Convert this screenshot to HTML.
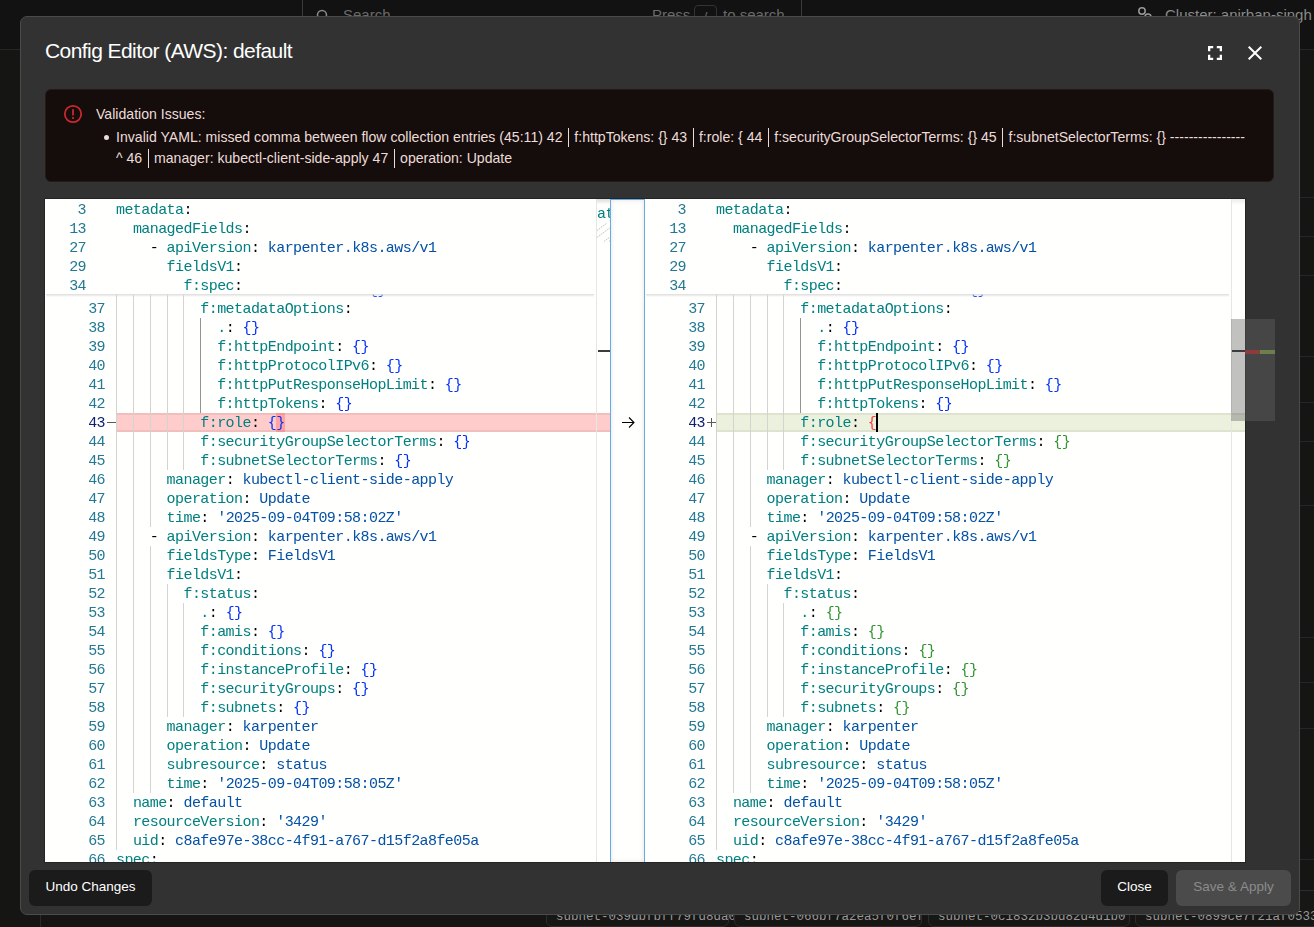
<!DOCTYPE html><html><head><meta charset="utf-8"><style>
*{margin:0;padding:0;box-sizing:border-box}
html,body{width:1314px;height:927px;overflow:hidden;background:#151513;font-family:"Liberation Sans",sans-serif}
.abs{position:absolute}
.modal{position:absolute;left:20px;top:16px;width:1280px;height:899px;background:#323232;border:1px solid #4b4b4b;border-radius:7px}
.title{position:absolute;left:45px;top:38.5px;font-size:21px;color:#fff;white-space:nowrap;letter-spacing:-0.57px}
.alert{position:absolute;left:45px;top:89px;width:1229px;height:93px;background:#150c0c;border:1px solid #251a1a;border-radius:6px}
.atext{position:absolute;color:#ecdcd8;font-size:14.1px;white-space:nowrap;line-height:21px}
.bar{display:inline-block;width:1.3px;height:19px;background:#ecdcd8;vertical-align:-5px;margin:0 5px 0 5.5px}
.edwrap{position:absolute;left:45px;top:199px;width:1200px;height:663px;background:#fffffe;overflow:hidden}
.ed{position:absolute;top:199px;height:663px;background:#fffffe;overflow:hidden;will-change:transform;font-family:"Liberation Mono",monospace;font-size:15px;letter-spacing:-0.57px}
.cl{position:absolute;left:71px;height:19px;line-height:19px;margin-top:1px;white-space:pre;color:#000}
.ln{position:absolute;left:0;width:60px;text-align:right;height:19px;line-height:19px;margin-top:1px;color:#237893}
.ln.act{color:#0b216f}
.mk{position:absolute;left:61px;width:10px;text-align:center;height:19px;line-height:19px;margin-top:1px;color:#555}
.sln{position:absolute;left:0;width:41px;text-align:right;height:19px;line-height:19px;margin-top:2px;color:#237893}
.sticky{position:absolute;left:0;top:0;right:14px;height:95px;background:#fffffe}
.sticky .cl{margin-top:2px}
.shadow{position:absolute;left:1px;right:16px;top:95px;height:3px;background:linear-gradient(#dcdcdc,rgba(220,220,220,0))}
.g{position:absolute;width:1px;height:19px;background:#d3d3d3}
.ga{background:#939393}
.del{position:absolute;left:71px;right:0;height:19px;background:#ffcccc;border-top:2px solid #f1bebe;border-bottom:2px solid #f1bebe}
.delch{position:absolute;height:19px;background:rgba(255,0,0,0.2)}
.delc{}
.ins{position:absolute;left:71px;right:0;height:19px;background:#ebf1dd;border-top:2px solid #dde3cf;border-bottom:2px solid #dde3cf}
.cur{position:absolute;width:2px;height:19px;background:#000}
.ruler{position:absolute;right:0;top:0;width:14px;height:663px;border-left:1px solid #e6e6e6;background:linear-gradient(rgba(0,0,0,0.08),rgba(0,0,0,0) 6px)}
.btn{position:absolute;top:870px;height:36px;border-radius:6px;font-size:13.5px;line-height:34px;text-align:center;white-space:nowrap}
</style></head><body>

<div class="abs" style="left:0;top:0;width:1314px;height:49px;background:#121212"></div>
<div class="abs" style="left:0;top:49px;width:1314px;height:1px;background:#262626"></div>
<div class="abs" style="left:302px;top:-12px;width:500px;height:45px;border:1px solid #3a3a3a;border-radius:6px"></div>
<svg class="abs" style="left:316px;top:9px" width="14" height="14" viewBox="0 0 14 14"><circle cx="6" cy="6" r="4.5" fill="none" stroke="#888" stroke-width="1.6"/></svg>
<div class="abs" style="left:343px;top:6px;font-size:15px;color:#6a6a6a">Search</div>
<div class="abs" style="left:652px;top:6px;font-size:15px;color:#6a6a6a">Press</div>
<div class="abs" style="left:694px;top:5px;width:23px;height:24px;border:1px solid #333;border-radius:4px;color:#6a6a6a;font-size:13px;text-align:center;line-height:22px">/</div>
<div class="abs" style="left:723px;top:6px;font-size:15px;color:#6a6a6a">to search</div>
<div class="abs" style="left:1165px;top:6px;font-size:15px;color:#8a8a8a;white-space:nowrap">Cluster: anirban-singh</div>
<svg class="abs" style="left:1137px;top:7px" width="20" height="12" viewBox="0 0 20 12"><circle cx="5" cy="4" r="3.2" fill="none" stroke="#999" stroke-width="1.5"/><circle cx="11" cy="10" r="3" fill="none" stroke="#999" stroke-width="1.5"/></svg>
<div class="abs" style="left:40px;top:880px;width:1px;height:47px;background:#2a2a2a"></div>
<div class="abs" style="left:1300px;top:49px;width:14px;height:1px;background:#262626"></div><div class="abs" style="left:1300px;top:197px;width:14px;height:1px;background:#262626"></div><div class="abs" style="left:1300px;top:236px;width:14px;height:1px;background:#262626"></div><div class="abs" style="left:1300px;top:275px;width:14px;height:1px;background:#262626"></div><div class="abs" style="left:1300px;top:356px;width:14px;height:1px;background:#262626"></div><div class="abs" style="left:1300px;top:402px;width:14px;height:1px;background:#262626"></div><div class="abs" style="left:1300px;top:441px;width:14px;height:1px;background:#262626"></div><div class="abs" style="left:1300px;top:505px;width:14px;height:1px;background:#262626"></div><div class="abs" style="left:1300px;top:637px;width:14px;height:1px;background:#262626"></div><div class="abs" style="left:1300px;top:682px;width:14px;height:1px;background:#262626"></div><div class="abs" style="left:1300px;top:728px;width:14px;height:1px;background:#262626"></div><div class="abs" style="left:1300px;top:859px;width:14px;height:1px;background:#262626"></div><div class="abs" style="left:1300px;top:890px;width:14px;height:1px;background:#262626"></div><div class="abs" style="left:1300px;top:899px;width:14px;height:1px;background:#262626"></div><div class="abs" style="left:546px;top:890px;width:183px;height:37px;border:1px solid #2c2c2c;border-radius:6px;background:#171715"></div><div class="abs" style="left:556px;top:909.5px;font-family:'Liberation Mono',monospace;font-size:12.5px;letter-spacing:0px;color:#999999;white-space:nowrap">subnet-039dbfbff79fd8da0</div><div class="abs" style="left:734px;top:890px;width:188px;height:37px;border:1px solid #2c2c2c;border-radius:6px;background:#171715"></div><div class="abs" style="left:744px;top:909.5px;font-family:'Liberation Mono',monospace;font-size:12.5px;letter-spacing:0px;color:#999999;white-space:nowrap">subnet-066bf7a2ea5f0f6ef</div><div class="abs" style="left:928px;top:890px;width:202px;height:37px;border:1px solid #2c2c2c;border-radius:6px;background:#171715"></div><div class="abs" style="left:938px;top:909.5px;font-family:'Liberation Mono',monospace;font-size:12.5px;letter-spacing:0px;color:#999999;white-space:nowrap">subnet-0c1832b3bd82d4d1b0</div><div class="abs" style="left:1135px;top:890px;width:205px;height:37px;border:1px solid #2c2c2c;border-radius:6px;background:#171715"></div><div class="abs" style="left:1145px;top:909.5px;font-family:'Liberation Mono',monospace;font-size:12.5px;letter-spacing:0px;color:#999999;white-space:nowrap">subnet-0899ce7f21af0533</div>
<div class="modal"></div>
<div class="title">Config Editor (AWS): default</div>

<svg class="abs" style="left:1208px;top:46px" width="14" height="14" viewBox="0 0 14 14" fill="none" stroke="#fff" stroke-width="2.3" stroke-linecap="butt"><path d="M1.15 5.2V1.15H5.2M8.8 1.15H12.85V5.2M12.85 8.8V12.85H8.8M5.2 12.85H1.15V8.8"/></svg>
<svg class="abs" style="left:1248px;top:46px" width="14" height="14" viewBox="0 0 14 14" fill="none" stroke="#fff" stroke-width="2"><path d="M0.7 0.7L13.3 13.3M13.3 0.7L0.7 13.3"/></svg>

<div class="alert"></div>
<svg class="abs" style="left:63px;top:104px" width="20" height="20" viewBox="0 0 20 20"><circle cx="10" cy="10" r="8.2" fill="none" stroke="#c9282d" stroke-width="1.8"/><rect x="9.1" y="5.2" width="1.8" height="6.3" fill="#c9282d"/><rect x="9.1" y="13" width="1.8" height="1.9" fill="#c9282d"/></svg>
<div class="atext" style="left:96px;top:104px">Validation Issues:</div>
<div class="abs" style="left:103.5px;top:134.5px;width:5.5px;height:5.5px;border-radius:50%;background:#ecdcd8"></div>
<div class="atext" style="left:116px;top:127px">Invalid YAML: missed comma between flow collection entries (45:11) 42<span class="bar"></span>f:httpTokens: {} 43<span class="bar"></span>f:role: { 44<span class="bar"></span>f:securityGroupSelectorTerms: {} 45<span class="bar"></span>f:subnetSelectorTerms: {} ----------------</div>
<div class="atext" style="left:116px;top:148px">^ 46<span class="bar"></span>manager: kubectl-client-side-apply 47<span class="bar"></span>operation: Update</div>
<div class="abs" style="left:44px;top:198px;width:1202px;height:665px;background:#fffffe;border:1px solid #242424"></div>
<div class="ed" style="left:45px;width:565px"><div class="g" style="top:62px;left:71.00px"></div><div class="g" style="top:62px;left:87.86px"></div><div class="g" style="top:62px;left:104.72px"></div><div class="g" style="top:62px;left:121.58px"></div><div class="g" style="top:62px;left:138.44px"></div><div class="ln" style="top:62px">35</div><div class="cl" style="top:62px">          <span style="color:#008080">.</span><span style="color:#000000">:</span> <span style="color:#0431fa">{}</span></div><div class="g" style="top:81px;left:71.00px"></div><div class="g" style="top:81px;left:87.86px"></div><div class="g" style="top:81px;left:104.72px"></div><div class="g" style="top:81px;left:121.58px"></div><div class="g" style="top:81px;left:138.44px"></div><div class="ln" style="top:81px">36</div><div class="cl" style="top:81px">          <span style="color:#008080">f:amiSelectorTerms</span><span style="color:#000000">:</span> <span style="color:#0431fa">{}</span></div><div class="g" style="top:100px;left:71.00px"></div><div class="g" style="top:100px;left:87.86px"></div><div class="g" style="top:100px;left:104.72px"></div><div class="g" style="top:100px;left:121.58px"></div><div class="g" style="top:100px;left:138.44px"></div><div class="ln" style="top:100px">37</div><div class="cl" style="top:100px">          <span style="color:#008080">f:metadataOptions</span><span style="color:#000000">:</span></div><div class="g" style="top:119px;left:71.00px"></div><div class="g" style="top:119px;left:87.86px"></div><div class="g" style="top:119px;left:104.72px"></div><div class="g" style="top:119px;left:121.58px"></div><div class="g" style="top:119px;left:138.44px"></div><div class="g ga" style="top:119px;left:155.30px"></div><div class="ln" style="top:119px">38</div><div class="cl" style="top:119px">            <span style="color:#008080">.</span><span style="color:#000000">:</span> <span style="color:#0431fa">{}</span></div><div class="g" style="top:138px;left:71.00px"></div><div class="g" style="top:138px;left:87.86px"></div><div class="g" style="top:138px;left:104.72px"></div><div class="g" style="top:138px;left:121.58px"></div><div class="g" style="top:138px;left:138.44px"></div><div class="g ga" style="top:138px;left:155.30px"></div><div class="ln" style="top:138px">39</div><div class="cl" style="top:138px">            <span style="color:#008080">f:httpEndpoint</span><span style="color:#000000">:</span> <span style="color:#0431fa">{}</span></div><div class="g" style="top:157px;left:71.00px"></div><div class="g" style="top:157px;left:87.86px"></div><div class="g" style="top:157px;left:104.72px"></div><div class="g" style="top:157px;left:121.58px"></div><div class="g" style="top:157px;left:138.44px"></div><div class="g ga" style="top:157px;left:155.30px"></div><div class="ln" style="top:157px">40</div><div class="cl" style="top:157px">            <span style="color:#008080">f:httpProtocolIPv6</span><span style="color:#000000">:</span> <span style="color:#0431fa">{}</span></div><div class="g" style="top:176px;left:71.00px"></div><div class="g" style="top:176px;left:87.86px"></div><div class="g" style="top:176px;left:104.72px"></div><div class="g" style="top:176px;left:121.58px"></div><div class="g" style="top:176px;left:138.44px"></div><div class="g ga" style="top:176px;left:155.30px"></div><div class="ln" style="top:176px">41</div><div class="cl" style="top:176px">            <span style="color:#008080">f:httpPutResponseHopLimit</span><span style="color:#000000">:</span> <span style="color:#0431fa">{}</span></div><div class="g" style="top:195px;left:71.00px"></div><div class="g" style="top:195px;left:87.86px"></div><div class="g" style="top:195px;left:104.72px"></div><div class="g" style="top:195px;left:121.58px"></div><div class="g" style="top:195px;left:138.44px"></div><div class="g ga" style="top:195px;left:155.30px"></div><div class="ln" style="top:195px">42</div><div class="cl" style="top:195px">            <span style="color:#008080">f:httpTokens</span><span style="color:#000000">:</span> <span style="color:#0431fa">{}</span></div><div class="del" style="top:214px"></div><div class="delch" style="top:214px;left:231.17px;width:8.43px"></div><div class="g" style="top:214px;left:71.00px"></div><div class="g" style="top:214px;left:87.86px"></div><div class="g" style="top:214px;left:104.72px"></div><div class="g" style="top:214px;left:121.58px"></div><div class="g" style="top:214px;left:138.44px"></div><div class="ln act" style="top:214px">43</div><div class="abs" style="top:223px;left:62px;width:9px;height:1px;background:#5a5a5a"></div><div class="cl" style="top:214px">          <span style="color:#008080">f:role</span><span style="color:#000000">:</span> <span style="color:#0431fa">{</span><span class="delc" style="color:#0431fa">}</span></div><div class="g" style="top:233px;left:71.00px"></div><div class="g" style="top:233px;left:87.86px"></div><div class="g" style="top:233px;left:104.72px"></div><div class="g" style="top:233px;left:121.58px"></div><div class="g" style="top:233px;left:138.44px"></div><div class="ln" style="top:233px">44</div><div class="cl" style="top:233px">          <span style="color:#008080">f:securityGroupSelectorTerms</span><span style="color:#000000">:</span> <span style="color:#0431fa">{}</span></div><div class="g" style="top:252px;left:71.00px"></div><div class="g" style="top:252px;left:87.86px"></div><div class="g" style="top:252px;left:104.72px"></div><div class="g" style="top:252px;left:121.58px"></div><div class="g" style="top:252px;left:138.44px"></div><div class="ln" style="top:252px">45</div><div class="cl" style="top:252px">          <span style="color:#008080">f:subnetSelectorTerms</span><span style="color:#000000">:</span> <span style="color:#0431fa">{}</span></div><div class="g" style="top:271px;left:71.00px"></div><div class="g" style="top:271px;left:87.86px"></div><div class="g" style="top:271px;left:104.72px"></div><div class="ln" style="top:271px">46</div><div class="cl" style="top:271px">      <span style="color:#008080">manager</span><span style="color:#000000">:</span> <span style="color:#0451a5">kubectl-client-side-apply</span></div><div class="g" style="top:290px;left:71.00px"></div><div class="g" style="top:290px;left:87.86px"></div><div class="g" style="top:290px;left:104.72px"></div><div class="ln" style="top:290px">47</div><div class="cl" style="top:290px">      <span style="color:#008080">operation</span><span style="color:#000000">:</span> <span style="color:#0451a5">Update</span></div><div class="g" style="top:309px;left:71.00px"></div><div class="g" style="top:309px;left:87.86px"></div><div class="g" style="top:309px;left:104.72px"></div><div class="ln" style="top:309px">48</div><div class="cl" style="top:309px">      <span style="color:#008080">time</span><span style="color:#000000">:</span> <span style="color:#0451a5">'2025-09-04T09:58:02Z'</span></div><div class="g" style="top:328px;left:71.00px"></div><div class="g" style="top:328px;left:87.86px"></div><div class="ln" style="top:328px">49</div><div class="cl" style="top:328px">    <span style="color:#000000">- </span><span style="color:#008080">apiVersion</span><span style="color:#000000">:</span> <span style="color:#0451a5">karpenter.k8s.aws/v1</span></div><div class="g" style="top:347px;left:71.00px"></div><div class="g" style="top:347px;left:87.86px"></div><div class="g" style="top:347px;left:104.72px"></div><div class="ln" style="top:347px">50</div><div class="cl" style="top:347px">      <span style="color:#008080">fieldsType</span><span style="color:#000000">:</span> <span style="color:#0451a5">FieldsV1</span></div><div class="g" style="top:366px;left:71.00px"></div><div class="g" style="top:366px;left:87.86px"></div><div class="g" style="top:366px;left:104.72px"></div><div class="ln" style="top:366px">51</div><div class="cl" style="top:366px">      <span style="color:#008080">fieldsV1</span><span style="color:#000000">:</span></div><div class="g" style="top:385px;left:71.00px"></div><div class="g" style="top:385px;left:87.86px"></div><div class="g" style="top:385px;left:104.72px"></div><div class="g" style="top:385px;left:121.58px"></div><div class="ln" style="top:385px">52</div><div class="cl" style="top:385px">        <span style="color:#008080">f:status</span><span style="color:#000000">:</span></div><div class="g" style="top:404px;left:71.00px"></div><div class="g" style="top:404px;left:87.86px"></div><div class="g" style="top:404px;left:104.72px"></div><div class="g" style="top:404px;left:121.58px"></div><div class="g" style="top:404px;left:138.44px"></div><div class="ln" style="top:404px">53</div><div class="cl" style="top:404px">          <span style="color:#008080">.</span><span style="color:#000000">:</span> <span style="color:#0431fa">{}</span></div><div class="g" style="top:423px;left:71.00px"></div><div class="g" style="top:423px;left:87.86px"></div><div class="g" style="top:423px;left:104.72px"></div><div class="g" style="top:423px;left:121.58px"></div><div class="g" style="top:423px;left:138.44px"></div><div class="ln" style="top:423px">54</div><div class="cl" style="top:423px">          <span style="color:#008080">f:amis</span><span style="color:#000000">:</span> <span style="color:#0431fa">{}</span></div><div class="g" style="top:442px;left:71.00px"></div><div class="g" style="top:442px;left:87.86px"></div><div class="g" style="top:442px;left:104.72px"></div><div class="g" style="top:442px;left:121.58px"></div><div class="g" style="top:442px;left:138.44px"></div><div class="ln" style="top:442px">55</div><div class="cl" style="top:442px">          <span style="color:#008080">f:conditions</span><span style="color:#000000">:</span> <span style="color:#0431fa">{}</span></div><div class="g" style="top:461px;left:71.00px"></div><div class="g" style="top:461px;left:87.86px"></div><div class="g" style="top:461px;left:104.72px"></div><div class="g" style="top:461px;left:121.58px"></div><div class="g" style="top:461px;left:138.44px"></div><div class="ln" style="top:461px">56</div><div class="cl" style="top:461px">          <span style="color:#008080">f:instanceProfile</span><span style="color:#000000">:</span> <span style="color:#0431fa">{}</span></div><div class="g" style="top:480px;left:71.00px"></div><div class="g" style="top:480px;left:87.86px"></div><div class="g" style="top:480px;left:104.72px"></div><div class="g" style="top:480px;left:121.58px"></div><div class="g" style="top:480px;left:138.44px"></div><div class="ln" style="top:480px">57</div><div class="cl" style="top:480px">          <span style="color:#008080">f:securityGroups</span><span style="color:#000000">:</span> <span style="color:#0431fa">{}</span></div><div class="g" style="top:499px;left:71.00px"></div><div class="g" style="top:499px;left:87.86px"></div><div class="g" style="top:499px;left:104.72px"></div><div class="g" style="top:499px;left:121.58px"></div><div class="g" style="top:499px;left:138.44px"></div><div class="ln" style="top:499px">58</div><div class="cl" style="top:499px">          <span style="color:#008080">f:subnets</span><span style="color:#000000">:</span> <span style="color:#0431fa">{}</span></div><div class="g" style="top:518px;left:71.00px"></div><div class="g" style="top:518px;left:87.86px"></div><div class="g" style="top:518px;left:104.72px"></div><div class="ln" style="top:518px">59</div><div class="cl" style="top:518px">      <span style="color:#008080">manager</span><span style="color:#000000">:</span> <span style="color:#0451a5">karpenter</span></div><div class="g" style="top:537px;left:71.00px"></div><div class="g" style="top:537px;left:87.86px"></div><div class="g" style="top:537px;left:104.72px"></div><div class="ln" style="top:537px">60</div><div class="cl" style="top:537px">      <span style="color:#008080">operation</span><span style="color:#000000">:</span> <span style="color:#0451a5">Update</span></div><div class="g" style="top:556px;left:71.00px"></div><div class="g" style="top:556px;left:87.86px"></div><div class="g" style="top:556px;left:104.72px"></div><div class="ln" style="top:556px">61</div><div class="cl" style="top:556px">      <span style="color:#008080">subresource</span><span style="color:#000000">:</span> <span style="color:#0451a5">status</span></div><div class="g" style="top:575px;left:71.00px"></div><div class="g" style="top:575px;left:87.86px"></div><div class="g" style="top:575px;left:104.72px"></div><div class="ln" style="top:575px">62</div><div class="cl" style="top:575px">      <span style="color:#008080">time</span><span style="color:#000000">:</span> <span style="color:#0451a5">'2025-09-04T09:58:05Z'</span></div><div class="g" style="top:594px;left:71.00px"></div><div class="ln" style="top:594px">63</div><div class="cl" style="top:594px">  <span style="color:#008080">name</span><span style="color:#000000">:</span> <span style="color:#0451a5">default</span></div><div class="g" style="top:613px;left:71.00px"></div><div class="ln" style="top:613px">64</div><div class="cl" style="top:613px">  <span style="color:#008080">resourceVersion</span><span style="color:#000000">:</span> <span style="color:#0451a5">'3429'</span></div><div class="g" style="top:632px;left:71.00px"></div><div class="ln" style="top:632px">65</div><div class="cl" style="top:632px">  <span style="color:#008080">uid</span><span style="color:#000000">:</span> <span style="color:#0451a5">c8afe97e-38cc-4f91-a767-d15f2a8fe05a</span></div><div class="ln" style="top:651px">66</div><div class="cl" style="top:651px"><span style="color:#008080">spec</span><span style="color:#000000">:</span></div><div class="g" style="top:670px;left:71.00px"></div><div class="ln" style="top:670px">67</div><div class="cl" style="top:670px">  <span style="color:#008080">amiFamily</span><span style="color:#000000">:</span> <span style="color:#0451a5">AL2023</span></div><div class="sticky"><div class="sln" style="top:0px">3</div><div class="cl" style="top:0px"><span style="color:#008080">metadata</span><span style="color:#000000">:</span></div><div class="sln" style="top:19px">13</div><div class="cl" style="top:19px">  <span style="color:#008080">managedFields</span><span style="color:#000000">:</span></div><div class="sln" style="top:38px">27</div><div class="cl" style="top:38px">    <span style="color:#000000">- </span><span style="color:#008080">apiVersion</span><span style="color:#000000">:</span> <span style="color:#0451a5">karpenter.k8s.aws/v1</span></div><div class="sln" style="top:57px">29</div><div class="cl" style="top:57px">      <span style="color:#008080">fieldsV1</span><span style="color:#000000">:</span></div><div class="sln" style="top:76px">34</div><div class="cl" style="top:76px">        <span style="color:#008080">f:spec</span><span style="color:#000000">:</span></div></div><div class="shadow"></div><div class="ruler"></div></div>
<div class="abs" style="left:610px;top:199px;width:35px;height:663px;border:1px solid #62ade8;border-bottom:none;background:#fffffe;box-shadow:inset 0 0 5px rgba(120,90,80,0.16)"></div>
<div class="abs" style="left:596px;top:199px;width:14px;height:663px;border-left:1px solid #e6e6e6;overflow:hidden">
 <div class="abs" style="left:0;top:0;width:14px;height:5px;background:linear-gradient(rgba(0,0,0,0.06),rgba(0,0,0,0))"></div>
 <div class="abs" style="left:0px;top:3.5px;height:19px;line-height:19px;margin-top:2px;font-family:'Liberation Mono',monospace;font-size:15px;letter-spacing:-0.57px;color:#008080;white-space:pre">at</div>
 <svg class="abs" style="left:0;top:21px" width="14" height="24" viewBox="0 0 14 24" stroke="#bdbdbd" stroke-width="0.9" stroke-dasharray="1.6 0.8"><path d="M0 10.5L10 3M0 17.5L14 7M7 21.5L14 16.3M12 21.5L14 20"/></svg>
 <div class="abs" style="left:1px;top:151px;width:13px;height:2px;background:#3c3c3c"></div>
</div>

<svg class="abs" style="left:621px;top:416px" width="15" height="13" viewBox="0 0 15 13" fill="none" stroke="#000" stroke-width="1.1"><path d="M1 6.5H13M8 1.5L13 6.5L8 11.5"/></svg>
<div class="ed" style="left:645px;width:600px"><div class="g" style="top:62px;left:71.00px"></div><div class="g" style="top:62px;left:87.86px"></div><div class="g" style="top:62px;left:104.72px"></div><div class="g" style="top:62px;left:121.58px"></div><div class="g" style="top:62px;left:138.44px"></div><div class="ln" style="top:62px">35</div><div class="cl" style="top:62px">          <span style="color:#008080">.</span><span style="color:#000000">:</span> <span style="color:#0431fa">{}</span></div><div class="g" style="top:81px;left:71.00px"></div><div class="g" style="top:81px;left:87.86px"></div><div class="g" style="top:81px;left:104.72px"></div><div class="g" style="top:81px;left:121.58px"></div><div class="g" style="top:81px;left:138.44px"></div><div class="ln" style="top:81px">36</div><div class="cl" style="top:81px">          <span style="color:#008080">f:amiSelectorTerms</span><span style="color:#000000">:</span> <span style="color:#0431fa">{}</span></div><div class="g" style="top:100px;left:71.00px"></div><div class="g" style="top:100px;left:87.86px"></div><div class="g" style="top:100px;left:104.72px"></div><div class="g" style="top:100px;left:121.58px"></div><div class="g" style="top:100px;left:138.44px"></div><div class="ln" style="top:100px">37</div><div class="cl" style="top:100px">          <span style="color:#008080">f:metadataOptions</span><span style="color:#000000">:</span></div><div class="g" style="top:119px;left:71.00px"></div><div class="g" style="top:119px;left:87.86px"></div><div class="g" style="top:119px;left:104.72px"></div><div class="g" style="top:119px;left:121.58px"></div><div class="g" style="top:119px;left:138.44px"></div><div class="g ga" style="top:119px;left:155.30px"></div><div class="ln" style="top:119px">38</div><div class="cl" style="top:119px">            <span style="color:#008080">.</span><span style="color:#000000">:</span> <span style="color:#0431fa">{}</span></div><div class="g" style="top:138px;left:71.00px"></div><div class="g" style="top:138px;left:87.86px"></div><div class="g" style="top:138px;left:104.72px"></div><div class="g" style="top:138px;left:121.58px"></div><div class="g" style="top:138px;left:138.44px"></div><div class="g ga" style="top:138px;left:155.30px"></div><div class="ln" style="top:138px">39</div><div class="cl" style="top:138px">            <span style="color:#008080">f:httpEndpoint</span><span style="color:#000000">:</span> <span style="color:#0431fa">{}</span></div><div class="g" style="top:157px;left:71.00px"></div><div class="g" style="top:157px;left:87.86px"></div><div class="g" style="top:157px;left:104.72px"></div><div class="g" style="top:157px;left:121.58px"></div><div class="g" style="top:157px;left:138.44px"></div><div class="g ga" style="top:157px;left:155.30px"></div><div class="ln" style="top:157px">40</div><div class="cl" style="top:157px">            <span style="color:#008080">f:httpProtocolIPv6</span><span style="color:#000000">:</span> <span style="color:#0431fa">{}</span></div><div class="g" style="top:176px;left:71.00px"></div><div class="g" style="top:176px;left:87.86px"></div><div class="g" style="top:176px;left:104.72px"></div><div class="g" style="top:176px;left:121.58px"></div><div class="g" style="top:176px;left:138.44px"></div><div class="g ga" style="top:176px;left:155.30px"></div><div class="ln" style="top:176px">41</div><div class="cl" style="top:176px">            <span style="color:#008080">f:httpPutResponseHopLimit</span><span style="color:#000000">:</span> <span style="color:#0431fa">{}</span></div><div class="g" style="top:195px;left:71.00px"></div><div class="g" style="top:195px;left:87.86px"></div><div class="g" style="top:195px;left:104.72px"></div><div class="g" style="top:195px;left:121.58px"></div><div class="g" style="top:195px;left:138.44px"></div><div class="g ga" style="top:195px;left:155.30px"></div><div class="ln" style="top:195px">42</div><div class="cl" style="top:195px">            <span style="color:#008080">f:httpTokens</span><span style="color:#000000">:</span> <span style="color:#0431fa">{}</span></div><div class="ins" style="top:214px"></div><div class="g" style="top:214px;left:71.00px"></div><div class="g" style="top:214px;left:87.86px"></div><div class="g" style="top:214px;left:104.72px"></div><div class="g" style="top:214px;left:121.58px"></div><div class="g" style="top:214px;left:138.44px"></div><div class="ln act" style="top:214px">43</div><div class="abs" style="top:223px;left:62px;width:9px;height:1px;background:#5a5a5a"></div><div class="abs" style="top:219px;left:66px;width:1px;height:9px;background:#5a5a5a"></div><div class="cl" style="top:214px">          <span style="color:#008080">f:role</span><span style="color:#000000">:</span> <span style="color:rgba(255,18,18,0.8)">{</span></div><div class="cur" style="top:214px;left:231.17px"></div><div class="g" style="top:233px;left:71.00px"></div><div class="g" style="top:233px;left:87.86px"></div><div class="g" style="top:233px;left:104.72px"></div><div class="g" style="top:233px;left:121.58px"></div><div class="g" style="top:233px;left:138.44px"></div><div class="ln" style="top:233px">44</div><div class="cl" style="top:233px">          <span style="color:#008080">f:securityGroupSelectorTerms</span><span style="color:#000000">:</span> <span style="color:#319331">{}</span></div><div class="g" style="top:252px;left:71.00px"></div><div class="g" style="top:252px;left:87.86px"></div><div class="g" style="top:252px;left:104.72px"></div><div class="g" style="top:252px;left:121.58px"></div><div class="g" style="top:252px;left:138.44px"></div><div class="ln" style="top:252px">45</div><div class="cl" style="top:252px">          <span style="color:#008080">f:subnetSelectorTerms</span><span style="color:#000000">:</span> <span style="color:#319331">{}</span></div><div class="g" style="top:271px;left:71.00px"></div><div class="g" style="top:271px;left:87.86px"></div><div class="g" style="top:271px;left:104.72px"></div><div class="ln" style="top:271px">46</div><div class="cl" style="top:271px">      <span style="color:#008080">manager</span><span style="color:#000000">:</span> <span style="color:#0451a5">kubectl-client-side-apply</span></div><div class="g" style="top:290px;left:71.00px"></div><div class="g" style="top:290px;left:87.86px"></div><div class="g" style="top:290px;left:104.72px"></div><div class="ln" style="top:290px">47</div><div class="cl" style="top:290px">      <span style="color:#008080">operation</span><span style="color:#000000">:</span> <span style="color:#0451a5">Update</span></div><div class="g" style="top:309px;left:71.00px"></div><div class="g" style="top:309px;left:87.86px"></div><div class="g" style="top:309px;left:104.72px"></div><div class="ln" style="top:309px">48</div><div class="cl" style="top:309px">      <span style="color:#008080">time</span><span style="color:#000000">:</span> <span style="color:#0451a5">'2025-09-04T09:58:02Z'</span></div><div class="g" style="top:328px;left:71.00px"></div><div class="g" style="top:328px;left:87.86px"></div><div class="ln" style="top:328px">49</div><div class="cl" style="top:328px">    <span style="color:#000000">- </span><span style="color:#008080">apiVersion</span><span style="color:#000000">:</span> <span style="color:#0451a5">karpenter.k8s.aws/v1</span></div><div class="g" style="top:347px;left:71.00px"></div><div class="g" style="top:347px;left:87.86px"></div><div class="g" style="top:347px;left:104.72px"></div><div class="ln" style="top:347px">50</div><div class="cl" style="top:347px">      <span style="color:#008080">fieldsType</span><span style="color:#000000">:</span> <span style="color:#0451a5">FieldsV1</span></div><div class="g" style="top:366px;left:71.00px"></div><div class="g" style="top:366px;left:87.86px"></div><div class="g" style="top:366px;left:104.72px"></div><div class="ln" style="top:366px">51</div><div class="cl" style="top:366px">      <span style="color:#008080">fieldsV1</span><span style="color:#000000">:</span></div><div class="g" style="top:385px;left:71.00px"></div><div class="g" style="top:385px;left:87.86px"></div><div class="g" style="top:385px;left:104.72px"></div><div class="g" style="top:385px;left:121.58px"></div><div class="ln" style="top:385px">52</div><div class="cl" style="top:385px">        <span style="color:#008080">f:status</span><span style="color:#000000">:</span></div><div class="g" style="top:404px;left:71.00px"></div><div class="g" style="top:404px;left:87.86px"></div><div class="g" style="top:404px;left:104.72px"></div><div class="g" style="top:404px;left:121.58px"></div><div class="g" style="top:404px;left:138.44px"></div><div class="ln" style="top:404px">53</div><div class="cl" style="top:404px">          <span style="color:#008080">.</span><span style="color:#000000">:</span> <span style="color:#319331">{}</span></div><div class="g" style="top:423px;left:71.00px"></div><div class="g" style="top:423px;left:87.86px"></div><div class="g" style="top:423px;left:104.72px"></div><div class="g" style="top:423px;left:121.58px"></div><div class="g" style="top:423px;left:138.44px"></div><div class="ln" style="top:423px">54</div><div class="cl" style="top:423px">          <span style="color:#008080">f:amis</span><span style="color:#000000">:</span> <span style="color:#319331">{}</span></div><div class="g" style="top:442px;left:71.00px"></div><div class="g" style="top:442px;left:87.86px"></div><div class="g" style="top:442px;left:104.72px"></div><div class="g" style="top:442px;left:121.58px"></div><div class="g" style="top:442px;left:138.44px"></div><div class="ln" style="top:442px">55</div><div class="cl" style="top:442px">          <span style="color:#008080">f:conditions</span><span style="color:#000000">:</span> <span style="color:#319331">{}</span></div><div class="g" style="top:461px;left:71.00px"></div><div class="g" style="top:461px;left:87.86px"></div><div class="g" style="top:461px;left:104.72px"></div><div class="g" style="top:461px;left:121.58px"></div><div class="g" style="top:461px;left:138.44px"></div><div class="ln" style="top:461px">56</div><div class="cl" style="top:461px">          <span style="color:#008080">f:instanceProfile</span><span style="color:#000000">:</span> <span style="color:#319331">{}</span></div><div class="g" style="top:480px;left:71.00px"></div><div class="g" style="top:480px;left:87.86px"></div><div class="g" style="top:480px;left:104.72px"></div><div class="g" style="top:480px;left:121.58px"></div><div class="g" style="top:480px;left:138.44px"></div><div class="ln" style="top:480px">57</div><div class="cl" style="top:480px">          <span style="color:#008080">f:securityGroups</span><span style="color:#000000">:</span> <span style="color:#319331">{}</span></div><div class="g" style="top:499px;left:71.00px"></div><div class="g" style="top:499px;left:87.86px"></div><div class="g" style="top:499px;left:104.72px"></div><div class="g" style="top:499px;left:121.58px"></div><div class="g" style="top:499px;left:138.44px"></div><div class="ln" style="top:499px">58</div><div class="cl" style="top:499px">          <span style="color:#008080">f:subnets</span><span style="color:#000000">:</span> <span style="color:#319331">{}</span></div><div class="g" style="top:518px;left:71.00px"></div><div class="g" style="top:518px;left:87.86px"></div><div class="g" style="top:518px;left:104.72px"></div><div class="ln" style="top:518px">59</div><div class="cl" style="top:518px">      <span style="color:#008080">manager</span><span style="color:#000000">:</span> <span style="color:#0451a5">karpenter</span></div><div class="g" style="top:537px;left:71.00px"></div><div class="g" style="top:537px;left:87.86px"></div><div class="g" style="top:537px;left:104.72px"></div><div class="ln" style="top:537px">60</div><div class="cl" style="top:537px">      <span style="color:#008080">operation</span><span style="color:#000000">:</span> <span style="color:#0451a5">Update</span></div><div class="g" style="top:556px;left:71.00px"></div><div class="g" style="top:556px;left:87.86px"></div><div class="g" style="top:556px;left:104.72px"></div><div class="ln" style="top:556px">61</div><div class="cl" style="top:556px">      <span style="color:#008080">subresource</span><span style="color:#000000">:</span> <span style="color:#0451a5">status</span></div><div class="g" style="top:575px;left:71.00px"></div><div class="g" style="top:575px;left:87.86px"></div><div class="g" style="top:575px;left:104.72px"></div><div class="ln" style="top:575px">62</div><div class="cl" style="top:575px">      <span style="color:#008080">time</span><span style="color:#000000">:</span> <span style="color:#0451a5">'2025-09-04T09:58:05Z'</span></div><div class="g" style="top:594px;left:71.00px"></div><div class="ln" style="top:594px">63</div><div class="cl" style="top:594px">  <span style="color:#008080">name</span><span style="color:#000000">:</span> <span style="color:#0451a5">default</span></div><div class="g" style="top:613px;left:71.00px"></div><div class="ln" style="top:613px">64</div><div class="cl" style="top:613px">  <span style="color:#008080">resourceVersion</span><span style="color:#000000">:</span> <span style="color:#0451a5">'3429'</span></div><div class="g" style="top:632px;left:71.00px"></div><div class="ln" style="top:632px">65</div><div class="cl" style="top:632px">  <span style="color:#008080">uid</span><span style="color:#000000">:</span> <span style="color:#0451a5">c8afe97e-38cc-4f91-a767-d15f2a8fe05a</span></div><div class="ln" style="top:651px">66</div><div class="cl" style="top:651px"><span style="color:#008080">spec</span><span style="color:#000000">:</span></div><div class="g" style="top:670px;left:71.00px"></div><div class="ln" style="top:670px">67</div><div class="cl" style="top:670px">  <span style="color:#008080">amiFamily</span><span style="color:#000000">:</span> <span style="color:#0451a5">AL2023</span></div><div class="sticky"><div class="sln" style="top:0px">3</div><div class="cl" style="top:0px"><span style="color:#008080">metadata</span><span style="color:#000000">:</span></div><div class="sln" style="top:19px">13</div><div class="cl" style="top:19px">  <span style="color:#008080">managedFields</span><span style="color:#000000">:</span></div><div class="sln" style="top:38px">27</div><div class="cl" style="top:38px">    <span style="color:#000000">- </span><span style="color:#008080">apiVersion</span><span style="color:#000000">:</span> <span style="color:#0451a5">karpenter.k8s.aws/v1</span></div><div class="sln" style="top:57px">29</div><div class="cl" style="top:57px">      <span style="color:#008080">fieldsV1</span><span style="color:#000000">:</span></div><div class="sln" style="top:76px">34</div><div class="cl" style="top:76px">        <span style="color:#008080">f:spec</span><span style="color:#000000">:</span></div></div><div class="shadow"></div><div class="ruler"></div></div>
<div class="abs" style="left:1231px;top:319px;width:44px;height:102px;background:rgba(100,100,100,0.4)"></div>
<div class="abs" style="left:1232px;top:350px;width:13px;height:2px;background:#3c3c3c"></div>
<div class="abs" style="left:1245px;top:350px;width:15px;height:4px;background:#8a3d3d"></div>
<div class="abs" style="left:1260px;top:350px;width:15px;height:4px;background:#6d7f4b"></div>

<div class="btn" style="left:29px;width:123px;background:#1b1b1b;color:#fff">Undo Changes</div>
<div class="btn" style="left:1101px;width:67px;background:#1b1b1b;color:#fff">Close</div>
<div class="btn" style="left:1176px;width:115px;background:#4b4b4b;color:#8c8c8c">Save &amp; Apply</div>

</body></html>
